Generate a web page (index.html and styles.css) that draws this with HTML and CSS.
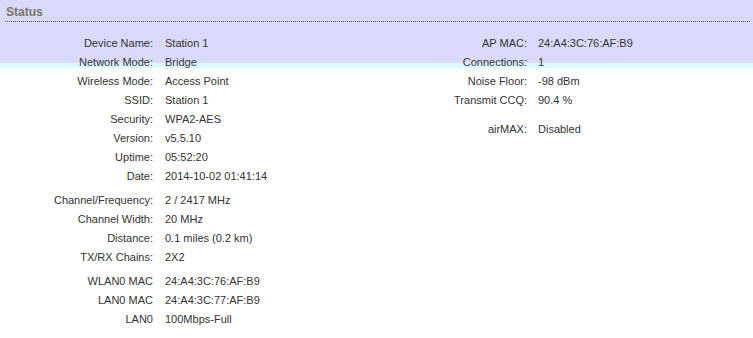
FILE: index.html
```html
<!DOCTYPE html>
<html lang="en">
<head>
  <meta charset="UTF-8">
  <title>Status</title>
  <link rel="stylesheet" href="styles.css">
</head>
<body>
  <div class="page">
    <h2 class="title">Status</h2>
    <div class="status">
      <div class="col col-left">
        <div class="row"><span class="label">Device Name:</span><span class="value">Station 1</span></div>
        <div class="row"><span class="label">Network Mode:</span><span class="value">Bridge</span></div>
        <div class="row"><span class="label">Wireless Mode:</span><span class="value">Access Point</span></div>
        <div class="row"><span class="label">SSID:</span><span class="value">Station 1</span></div>
        <div class="row"><span class="label">Security:</span><span class="value">WPA2-AES</span></div>
        <div class="row"><span class="label">Version:</span><span class="value">v5.5.10</span></div>
        <div class="row"><span class="label">Uptime:</span><span class="value">05:52:20</span></div>
        <div class="row"><span class="label">Date:</span><span class="value">2014-10-02 01:41:14</span></div>
        <div class="row sep"><span class="label">Channel/Frequency:</span><span class="value">2 / 2417 MHz</span></div>
        <div class="row"><span class="label">Channel Width:</span><span class="value">20 MHz</span></div>
        <div class="row"><span class="label">Distance:</span><span class="value">0.1 miles (0.2 km)</span></div>
        <div class="row"><span class="label">TX/RX Chains:</span><span class="value">2X2</span></div>
        <div class="row sep"><span class="label">WLAN0 MAC</span><span class="value">24:A4:3C:76:AF:B9</span></div>
        <div class="row"><span class="label">LAN0 MAC</span><span class="value">24:A4:3C:77:AF:B9</span></div>
        <div class="row"><span class="label">LAN0</span><span class="value">100Mbps-Full</span></div>
      </div>
      <div class="col col-right">
        <div class="row"><span class="label">AP MAC:</span><span class="value">24:A4:3C:76:AF:B9</span></div>
        <div class="row"><span class="label">Connections:</span><span class="value">1</span></div>
        <div class="row"><span class="label">Noise Floor:</span><span class="value">-98 dBm</span></div>
        <div class="row"><span class="label">Transmit CCQ:</span><span class="value">90.4 %</span></div>
        <div class="row sep-big"><span class="label">airMAX:</span><span class="value">Disabled</span></div>
      </div>
    </div>
  </div>
</body>
</html>
```

FILE: styles.css
```css
body { margin:0; padding:0; font-family:"Liberation Sans", Arial, sans-serif; font-size:11px; color:#333;
  background: linear-gradient(#dadafc 0, #dadafc 63px, #dcfcfc 63px, #dcfcfc 68px, #fff 68px); min-height:338px; }
.page { padding: 0 3px 0 5px; }
.title { margin:0; padding:5px 0 2px 1px; font-size:12px; font-weight:bold; color:#77775f; line-height:14px; border-bottom:1px dotted #555; }
.status { display:flex; padding-top:12px; }
.col-left { width:371px; }
.col-right { flex:1; }
.row { display:flex; line-height:19px; height:19px; }
.row.sep { margin-top:5px; }
.row.sep-big { margin-top:10px; }
.label { text-align:right; white-space:nowrap; }
.col-left .label { width:148px; margin-right:12px; }
.col-right .label { width:151px; margin-right:11px; }
```
